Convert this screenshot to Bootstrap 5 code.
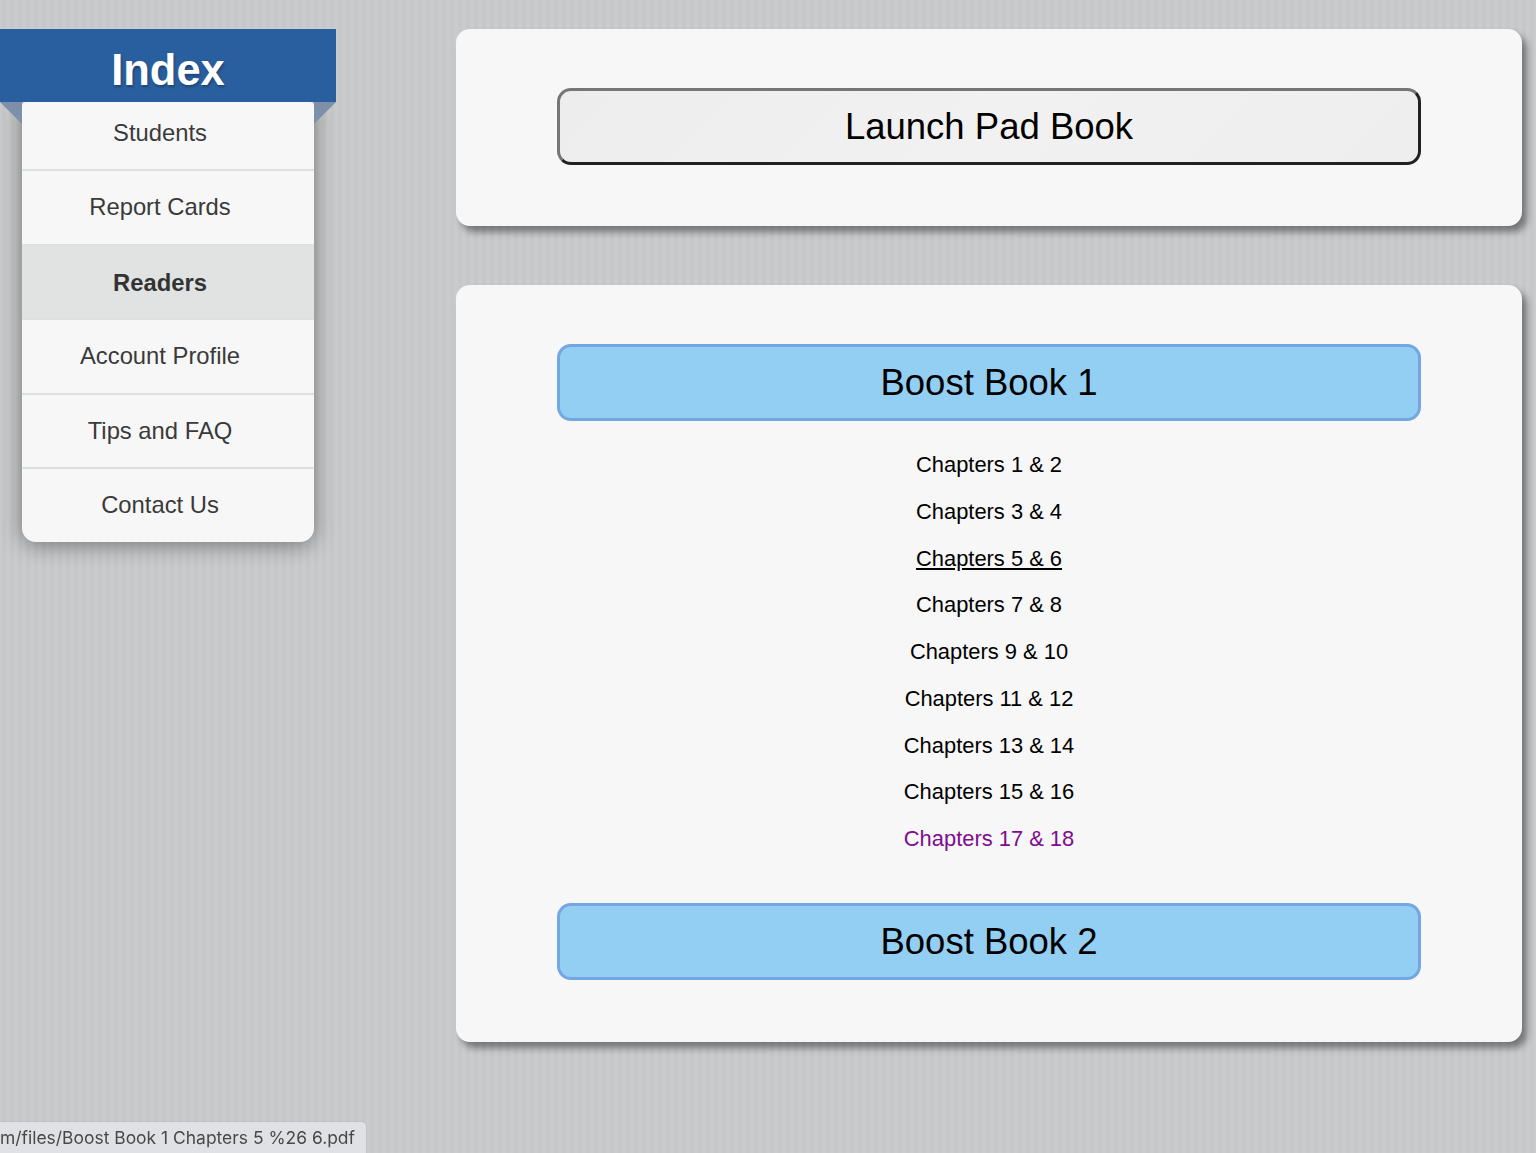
<!DOCTYPE html>
<html lang="en">
<head>
<meta charset="utf-8">
<title>Readers</title>
<link href="https://cdn.jsdelivr.net/npm/bootstrap@5.3.0/dist/css/bootstrap.min.css" rel="stylesheet">
<style>
html,body{height:100%;}
body{font-family:"Liberation Sans",Arial,sans-serif;background-color:#c9cacc;background-image:repeating-linear-gradient(90deg,rgba(255,255,255,.05) 0,rgba(0,0,0,.018) 4px,rgba(255,255,255,.05) 8px);overflow:hidden;}
.pg-wrap{padding-top:29px;gap:120px;}
.side{width:336px;flex:none;}
.side-head{height:73px;background:#2a5f9f;color:#fff;font-size:43.5px;font-weight:700;line-height:83px;text-shadow:1px 2px 3px rgba(0,0,0,.3);position:relative;z-index:2;}
.side-head::before,.side-head::after{content:"";position:absolute;top:100%;width:22px;height:22px;background:#7d8fa9;}
.side-head::before{left:0;clip-path:polygon(0 0,100% 0,100% 100%);}
.side-head::after{right:0;clip-path:polygon(0 0,100% 0,0 100%);}
.side-menu{margin:0 22px;background:#f7f7f7;border-radius:4px 4px 14px 14px;box-shadow:0 3px 22px rgba(0,0,0,.42);position:relative;overflow:hidden;}
.side-menu .list-group-item{background:transparent;border:0;border-top:2px solid #dedfdf;padding:0 16px 0 0;height:74.5px;line-height:71px;text-align:center;color:#3a3a3a;font-size:23.8px;}
.side-menu .list-group-item:first-child{border-top:0;height:67px;line-height:62px;}
.side-menu .list-group-item.active{background:#e1e3e3;color:#333;font-weight:700;margin:0;line-height:75px;}
.main-col{width:1066px;flex:none;}
.panel{background:#f7f7f7;border-radius:14px;box-shadow:5px 6px 7px rgba(0,0,0,.42);padding:59px 101px 61px;}
.panel + .panel{margin-top:59px;padding-bottom:62px;}
.big-btn{display:block;width:100%;height:77px;border-radius:14px;font-size:36.5px;color:#000;line-height:1;padding:2px 0 0;}
.btn-grey{background:linear-gradient(135deg,#ededed,#f1f1f1 50%,#eeeeee);border:3px solid;border-color:#767676 #222 #222 #767676;}
.btn-blue{background:#93cff3;border:3px solid #74a7e2;}
.chap-list{padding:20px 0 41.25px;}
.chap-list a{display:block;height:46.75px;line-height:47px;font-size:21.9px;color:#000;text-align:center;text-decoration:none;}
.chap-list a.hov{text-decoration:underline;}
.chap-list a.seen{color:#800c8f;}
.status-tip{position:fixed;left:0;bottom:0;width:366px;height:31px;background:#e0e1e4;border-radius:0 4px 0 0;color:#484848;font-family:Inter,"Liberation Sans",sans-serif;font-size:17.45px;line-height:32px;white-space:nowrap;overflow:hidden;box-shadow:0 0 1px rgba(0,0,0,.4);}
</style>
</head>
<body>
<div class="d-flex pg-wrap">
  <aside class="side">
    <div class="side-head text-center">Index</div>
    <div class="list-group list-group-flush side-menu">
      <a href="#" class="list-group-item">Students</a>
      <a href="#" class="list-group-item">Report Cards</a>
      <a href="#" class="list-group-item active">Readers</a>
      <a href="#" class="list-group-item">Account Profile</a>
      <a href="#" class="list-group-item">Tips and FAQ</a>
      <a href="#" class="list-group-item">Contact Us</a>
    </div>
  </aside>
  <main class="main-col">
    <section class="panel">
      <button type="button" class="btn big-btn btn-grey">Launch Pad Book</button>
    </section>
    <section class="panel">
      <button type="button" class="btn big-btn btn-blue">Boost Book 1</button>
      <nav class="chap-list">
        <a href="#">Chapters 1 &amp; 2</a>
        <a href="#">Chapters 3 &amp; 4</a>
        <a href="#" class="hov">Chapters 5 &amp; 6</a>
        <a href="#">Chapters 7 &amp; 8</a>
        <a href="#">Chapters 9 &amp; 10</a>
        <a href="#">Chapters 11 &amp; 12</a>
        <a href="#">Chapters 13 &amp; 14</a>
        <a href="#">Chapters 15 &amp; 16</a>
        <a href="#" class="seen">Chapters 17 &amp; 18</a>
      </nav>
      <button type="button" class="btn big-btn btn-blue">Boost Book 2</button>
    </section>
  </main>
</div>
<div class="status-tip">m/files/Boost Book 1 Chapters 5 %26 6.pdf</div>
<script src="https://cdn.jsdelivr.net/npm/bootstrap@5.3.0/dist/js/bootstrap.bundle.min.js"></script>
</body>
</html>
